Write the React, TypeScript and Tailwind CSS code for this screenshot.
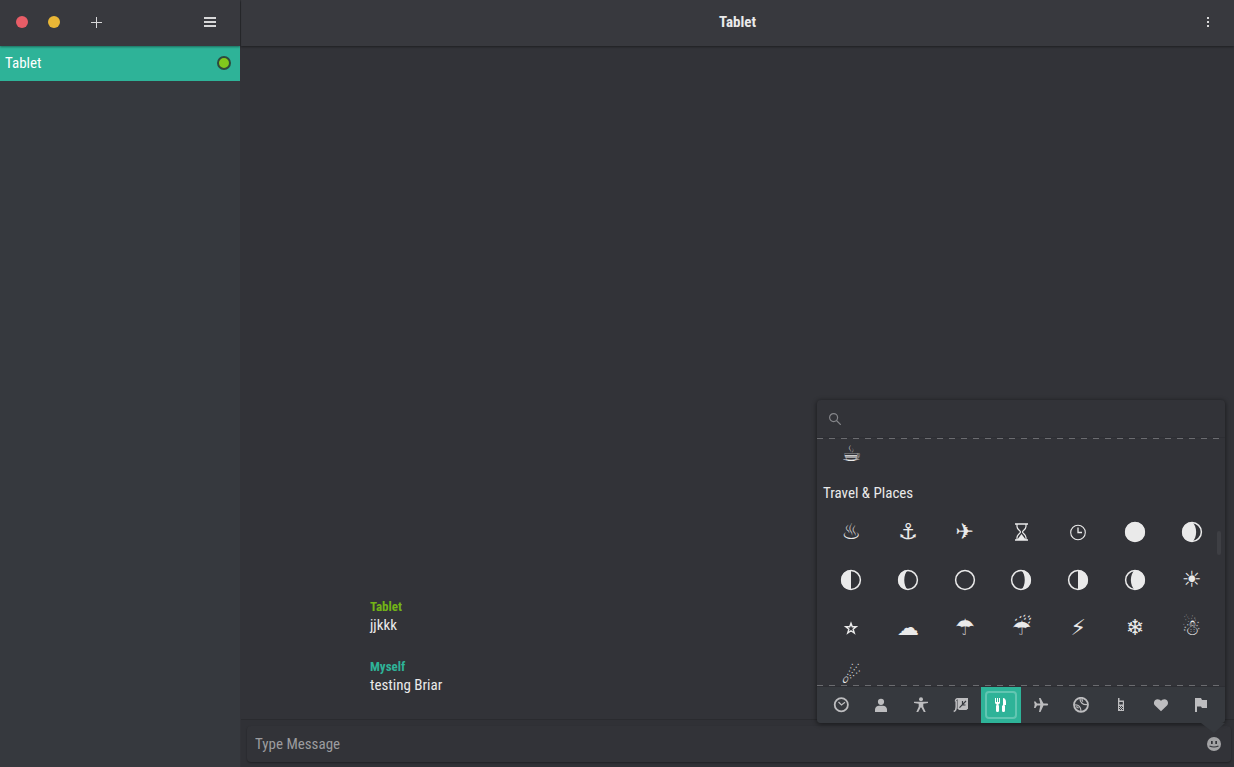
import React from 'react';

const CrescentMoon: React.FC<{ lit: string }> = ({ lit }) => (
  <svg className="h-6 w-6" viewBox="0 0 24 24" fill="none">
    <circle cx="12" cy="12" r="9.4" stroke="currentColor" strokeWidth="1.5" />
    <path d={lit} fill="currentColor" />
  </svg>
);

const Glyph: React.FC<{ char: string }> = ({ char }) => (
  <span className="font-['DejaVu_Sans',sans-serif] text-[22px] leading-5">{char}</span>
);

const OutlineStar = () => (
  <svg className="h-6 w-6" viewBox="0 0 24 24" fill="none" stroke="currentColor" strokeWidth="1.4">
    <path d="M12 7.200l1.300 3.600h3.900l-3.100 2.400 1.200 3.900-3.300-2.300-3.300 2.300 1.200-3.900-3.100-2.400h3.900z" />
  </svg>
);

const ThreeOClock = () => (
  <svg className="h-6 w-6" viewBox="0 0 24 24" fill="none" stroke="currentColor">
    <circle cx="12" cy="12.5" r="7.3" strokeWidth="1.1" />
    <path d="M12 7.5v5h4" strokeWidth="1.3" />
  </svg>
);

const Hourglass = () => (
  <svg className="h-6 w-6" viewBox="0 0 24 24" fill="none" stroke="currentColor">
    <path d="M6 4h13M6 20h13" strokeWidth="1.6" />
    <path d="M8 4v2.500c0 3 3.500 4 3.500 5.500S8 14.500 8 17.500V20M17 4v2.500c0 3-3.500 4-3.500 5.500s3.500 2.500 3.500 5.500V20" strokeWidth="1.2" />
    <path d="M12.500 14l4.500 6H8z" fill="currentColor" stroke="none" />
  </svg>
);

const places: { name: string; icon: React.ReactNode }[] = [
  { name: 'Hot springs', icon: <Glyph char="♨" /> },
  { name: 'Anchor', icon: <Glyph char="⚓" /> },
  { name: 'Airplane', icon: <Glyph char="✈" /> },
  { name: 'Hourglass', icon: <Hourglass /> },
  { name: 'Three o’clock', icon: <ThreeOClock /> },
  { name: 'Full moon', icon: <CrescentMoon lit="M12 2a10 10 0 0 1 0 20a10 10 0 0 1 0-20" /> },
  { name: 'Waxing gibbous moon', icon: <CrescentMoon lit="M12 2a10 10 0 0 0 0 20c5.500-4 5.500-16 0-20" /> },
  { name: 'First quarter moon', icon: <CrescentMoon lit="M12 2a10 10 0 0 0 0 20z" /> },
  { name: 'Waxing crescent moon', icon: <CrescentMoon lit="M12 2a10 10 0 0 0 0 20c-5-4-5-16 0-20" /> },
  { name: 'New moon', icon: <CrescentMoon lit="" /> },
  { name: 'Waning crescent moon', icon: <CrescentMoon lit="M12 2a10 10 0 0 1 0 20c5-4 5-16 0-20" /> },
  { name: 'Last quarter moon', icon: <CrescentMoon lit="M12 2a10 10 0 0 1 0 20z" /> },
  { name: 'Waning gibbous moon', icon: <CrescentMoon lit="M12 2a10 10 0 0 1 0 20c-5.500-4-5.500-16 0-20" /> },
  { name: 'Sun', icon: <Glyph char="☀" /> },
  { name: 'Star', icon: <OutlineStar /> },
  { name: 'Cloud', icon: <Glyph char="☁" /> },
  { name: 'Umbrella', icon: <Glyph char="☂" /> },
  { name: 'Umbrella with rain', icon: <Glyph char="☔" /> },
  { name: 'High voltage', icon: <Glyph char="⚡" /> },
  { name: 'Snowflake', icon: <Glyph char="❄" /> },
  { name: 'Snowman', icon: <Glyph char="☃" /> },
  { name: 'Comet', icon: <Glyph char="☄" /> },
];

const categories: { name: string; icon: React.ReactNode }[] = [
  {
    name: 'Recent',
    icon: (
      <g fill="none" stroke="currentColor">
        <circle cx="8.300" cy="7.700" r="6.600" strokeWidth="1.800" />
        <path d="M5.500 5l3 3L12 5.200" strokeWidth="1.200" />
      </g>
    ),
  },
  {
    name: 'Smileys & People',
    icon: <path d="M8 1.700a3.100 3.100 0 0 1 0 6.200a3.100 3.100 0 0 1 0-6.200M2 15v-2.500C2 10 4 8.700 6 8.700h4c2 0 4 1.300 4 3.800V15z" fill="currentColor" />,
  },
  {
    name: 'Body & Clothing',
    icon: (
      <g fill="currentColor">
        <circle cx="8" cy="2.200" r="2" />
        <path d="M1 4.700h14v1.200l-4.700.8v3L12.700 15h-1.900L8.400 10.500h-.8L5.200 15H3.300l2.400-5.300v-3L1 5.900z" />
      </g>
    ),
  },
  {
    name: 'Animals & Nature',
    icon: (
      <g>
        <path d="M7 1h8v10.500L13.500 13H6l-1.500-1.500V4C4.500 2 5 1 7 1z" fill="currentColor" />
        <path d="M6.500 10.700L13 4M9.500 4v3.500M8.500 8h4" stroke="#36393e" strokeWidth="1.200" fill="none" />
        <path d="M7 1.700H4.500C3 1.700 2.500 3 2.500 4.500M3.200 4v6c0 2.500-.7 4-2.500 4.500" stroke="currentColor" strokeWidth="1.500" fill="none" />
      </g>
    ),
  },
  {
    name: 'Food & Drink',
    icon: (
      <path
        d="M2 1h1v4h1V1h1v4h1V1h1v4.500C7 6.500 6 7 5.500 7.200V8L6 9v4.500c0 2-3 2-3 0V9l.500-1v-.8C3 7 2 6.500 2 5.500zM10 1c2 0 3 2 3 4v3h-1.500l.5 1v4.500c0 2-3 2-3 0V9l1-1z"
        fill="currentColor"
      />
    ),
  },
  {
    name: 'Travel & Places',
    icon: <path d="M6 1h1.500l3 5.600H14c1.500 0 1.500 2 0 2h-3.500L7.500 15H6l1.300-6.400H4L2.500 11H1l.7-3.400L1 4.500h1.500L4 6.600h3.300z" fill="currentColor" />,
  },
  {
    name: 'Activities',
    icon: (
      <g fill="none" stroke="currentColor">
        <circle cx="8" cy="7.800" r="7" strokeWidth="1.800" />
        <path d="M7 1.500c-.2 3.500 2.500 6.500 7 6.200M2 8c3.500-.5 6 2 6 6M9 2c-.3 1.500.5 2 1 2.500M3 10c1-.5 2 .5 2.500 1.300" strokeWidth="1.200" />
      </g>
    ),
  },
  {
    name: 'Objects',
    icon: (
      <g>
        <path d="M5 1h1.500v2.500H11V14H5z" fill="currentColor" />
        <path d="M6.300 5h3.500v2.500H6.300zM6 9h1v1H6zM8 9h1v1H8zM7 10h1v1H7zM9 10h1v1H9zM6 11h1v1H6zM8 11h1v1H8zM7 12h1v1H7zM9 12h1v1H9z" fill="#36393e" />
      </g>
    ),
  },
  {
    name: 'Symbols',
    icon: <path d="M8 14.200L2 8.500C0 6.500 1 2.200 4.500 2.200 6.300 2.200 7.300 3 8 4c.7-1 1.700-1.800 3.500-1.800C15 2.200 16 6.500 14 8.500z" fill="currentColor" />,
  },
  {
    name: 'Flags',
    icon: <path d="M2 1h6l1 2h5v8H9l-1-1.500H4V15H2z" fill="currentColor" />,
  },
];

const messages = [
  { author: 'Tablet', color: 'text-[#73b516]', text: 'jjkkk' },
  { author: 'Myself', color: 'text-[#2eb398]', text: 'testing Briar' },
];

const EmojiPicker: React.FC = () => (
  <div className="absolute right-[9px] bottom-[44px] z-20 w-[408px] rounded-sm bg-[#323338] shadow-[0_1px_4px_1px_rgba(0,0,0,0.4)]">
    <label className="flex h-[38px] items-center gap-2 border-b border-[#2d2e33] px-3">
      <svg className="h-3 w-3 text-[#85868a]" viewBox="0 0 12 12" fill="none" stroke="currentColor" strokeWidth="1.200">
        <circle cx="4.600" cy="4.600" r="4" />
        <path d="M7.500 7.500l4.300 4.300" />
      </svg>
      <input type="search" aria-label="Search emoji" className="min-w-0 flex-1 bg-transparent outline-none" />
    </label>

    <div className="relative h-[248px] overflow-hidden text-[#eaeaea]">
      <div className="-mt-2 grid grid-cols-7 pr-[5px] pl-1.5">
        <button aria-label="Hot beverage" className="flex h-12 items-center justify-center">
          <Glyph char="☕" />
        </button>
      </div>
      <h2 className="h-[30px] px-1.5 leading-[30px]">Travel &amp; Places</h2>
      <div className="grid grid-cols-7 pr-[5px] pl-1.5">
        {places.map((place) => (
          <button key={place.name} aria-label={place.name} className="flex h-12 items-center justify-center">
            {place.icon}
          </button>
        ))}
      </div>
      <div className="absolute inset-x-0 top-0 mr-1.5 h-px bg-[repeating-linear-gradient(90deg,#6b6c70_0px,#6b6c70_6px,transparent_6px,transparent_12px)]" />
      <div className="absolute inset-x-0 bottom-0 mr-1.5 h-px bg-[repeating-linear-gradient(90deg,#6b6c70_0px,#6b6c70_6px,transparent_6px,transparent_12px)]" />
      <div className="absolute top-[93px] right-1 h-6 w-1 rounded-full bg-[#3e3f44]" />
    </div>

    <div className="flex h-[37px] justify-center rounded-b-sm border-t border-[#2d2e33] bg-[#36393e]">
      {categories.map((category) => {
        const active = category.name === 'Food & Drink';
        return (
          <button
            key={category.name}
            aria-label={category.name}
            className={`flex w-10 items-center justify-center p-1 ${active ? 'bg-[#2eb398] text-white' : 'text-[#bdbdbf]'}`}
          >
            <span className={`flex h-full w-full items-center justify-center rounded-sm border-2 ${active ? 'border-white/25' : 'border-transparent'}`}>
              <svg className="h-4 w-4" viewBox="0 0 16 16">{category.icon}</svg>
            </span>
          </button>
        );
      })}
    </div>
    <svg className="absolute top-full right-0 h-2.5 w-6" viewBox="0 0 24 10">
      <path d="M0 0h24L13 10z" fill="#36393e" />
    </svg>
  </div>
);

function App() {
  return (
    <div className="flex h-screen bg-[#323338] font-['Ubuntu_Condensed','Roboto_Condensed','Open_Sans_Condensed',Lato,sans-serif] text-[15px] text-[#eaeaea]">
      <aside className="flex w-[241px] shrink-0 flex-col border-r border-[#323338] bg-[#36393e]">
        <header className="z-10 flex h-[46px] items-center bg-[#38393e] pr-5 pb-0.5 pl-4 shadow-[0_1px_2px_rgba(0,0,0,0.4)]">
          <button aria-label="Close" className="h-3 w-3 rounded-full bg-[#e85d67]" />
          <button aria-label="Minimize" className="ml-5 h-3 w-3 rounded-full bg-[#eab736]" />
          <button aria-label="Add contact" className="ml-[31px]">
            <svg className="h-[11px] w-[11px]" viewBox="0 0 11 11" stroke="#d8d8d9">
              <path d="M5.500 0v11M0 5.500h11" />
            </svg>
          </button>
          <button aria-label="Menu" className="mr-1 ml-auto">
            <svg className="h-2.5 w-3" viewBox="0 0 12 10" fill="#d8d8d9">
              <path d="M0 0h12v2H0zM0 4h12v2H0zM0 8h12v2H0z" />
            </svg>
          </button>
        </header>
        <button className="flex h-[35px] items-center justify-between bg-[#2eb398] pr-[9px] pb-px pl-[5px] text-white">
          <span>Tablet</span>
          <span className="h-3.5 w-3.5 rounded-full border-2 border-[#2e4a3c] bg-[#81c91d]" />
        </button>
      </aside>

      <main className="relative flex min-w-0 flex-1 flex-col">
        <header className="flex h-[46px] shrink-0 items-center bg-[#38393e] px-5 pb-0.5 shadow-[0_1px_2px_rgba(0,0,0,0.4)]">
          <span className="w-3" />
          <h1 className="flex-1 text-center font-bold">Tablet</h1>
          <button aria-label="Conversation menu" className="flex w-3 justify-center">
            <svg className="h-2.5 w-0.5" viewBox="0 0 2 10" fill="#d8d8d9">
              <path d="M0 0h2v2H0zM0 4h2v2H0zM0 8h2v2H0z" />
            </svg>
          </button>
        </header>

        <section className="mx-auto flex w-full max-w-[735px] flex-1 flex-col justify-end gap-6 pb-6">
          {messages.map((message) => (
            <article key={message.author}>
              <p className={`text-[13px] leading-4 font-bold ${message.color}`}>{message.author}</p>
              <p className="leading-5">{message.text}</p>
            </article>
          ))}
        </section>

        <footer className="border-t border-[#2a2b2f] bg-[#303136] pt-1.5 pr-[3px] pb-[5px] pl-1.5">
          <div className="flex h-9 items-center rounded-sm bg-[#323338] pr-2.5 pl-2 shadow-[0_1px_2px_rgba(0,0,0,0.35)]">
            <input
              type="text"
              aria-label="Message"
              placeholder="Type Message"
              className="min-w-0 flex-1 bg-transparent outline-none placeholder:text-[#9c9c9f]"
            />
            <button aria-label="Insert emoji">
              <svg className="h-3.5 w-3.5" viewBox="0 0 14 14">
                <circle cx="7" cy="7" r="7" fill="#a3a3a5" />
                <path d="M4 4h1.700v3H4zM8.300 4H10v3H8.300z" fill="#323338" />
                <path d="M2.500 9q4.500 2 9 0" stroke="#323338" strokeWidth="1.200" fill="none" />
              </svg>
            </button>
          </div>
        </footer>

        <EmojiPicker />
      </main>
    </div>
  );
}

export default App;
